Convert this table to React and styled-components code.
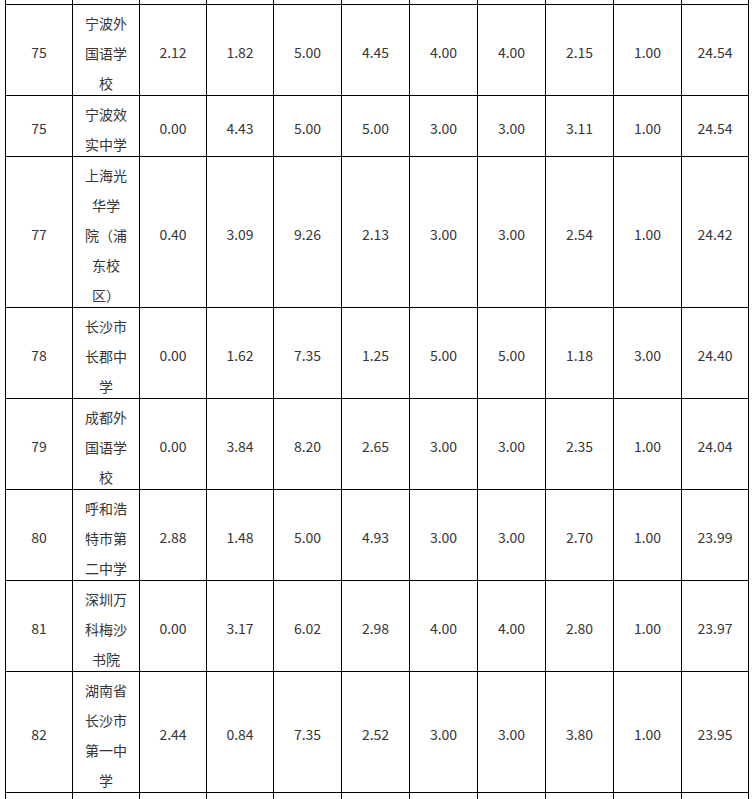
import React from "react";
import styled, { createGlobalStyle } from "styled-components";

const GlobalStyle = createGlobalStyle`
  html, body {
    margin: 0;
    padding: 0;
    background: #ffffff;
  }
  body {
    font-family: "Noto Sans CJK SC", "Noto Sans", sans-serif;
  }
`;

const Page = styled.div`
  padding-left: 5px;
`;

const Table = styled.table`
  border-collapse: collapse;
  table-layout: fixed;
  width: 744px;
  color: #363636;
  font-size: 14px;
  line-height: 30px;
`;

const Cell = styled.td`
  border: 1px solid #000;
  padding: 0 4px;
  text-align: center;
  vertical-align: middle;
  white-space: nowrap;
  ${(p) => (p.$stub ? "border-top: none; height: 4px; line-height: 0; padding: 0;" : "")}
  ${(p) => (p.$tail ? "border-bottom: none; height: 30px;" : "")}
`;

const Content = styled.span`
  display: inline-block;
  transform: translateY(${(p) => (p.$multi ? "3px" : "2px")});
`;

const colWidths = [67, 67, 67, 67, 68, 68, 68, 68, 68, 68, 67];

const rows = [
  ["75", ["宁波外", "国语学", "校"], "2.12", "1.82", "5.00", "4.45", "4.00", "4.00", "2.15", "1.00", "24.54"],
  ["75", ["宁波效", "实中学"], "0.00", "4.43", "5.00", "5.00", "3.00", "3.00", "3.11", "1.00", "24.54"],
  ["77", ["上海光", "华学", "院（浦", "东校", "区）"], "0.40", "3.09", "9.26", "2.13", "3.00", "3.00", "2.54", "1.00", "24.42"],
  ["78", ["长沙市", "长郡中", "学"], "0.00", "1.62", "7.35", "1.25", "5.00", "5.00", "1.18", "3.00", "24.40"],
  ["79", ["成都外", "国语学", "校"], "0.00", "3.84", "8.20", "2.65", "3.00", "3.00", "2.35", "1.00", "24.04"],
  ["80", ["呼和浩", "特市第", "二中学"], "2.88", "1.48", "5.00", "4.93", "3.00", "3.00", "2.70", "1.00", "23.99"],
  ["81", ["深圳万", "科梅沙", "书院"], "0.00", "3.17", "6.02", "2.98", "4.00", "4.00", "2.80", "1.00", "23.97"],
  ["82", ["湖南省", "长沙市", "第一中", "学"], "2.44", "0.84", "7.35", "2.52", "3.00", "3.00", "3.80", "1.00", "23.95"],
];

export default function App() {
  return (
    <Page>
      <GlobalStyle />
      <Table>
        <colgroup>
          {colWidths.map((w, i) => (
            <col key={i} style={{ width: w }} />
          ))}
        </colgroup>
        <tbody>
          <tr>
            {colWidths.map((_, i) => (
              <Cell key={i} $stub />
            ))}
          </tr>
          {rows.map((r, ri) => (
            <tr key={ri}>
              {r.map((c, ci) => (
                <Cell key={ci}>
                  {Array.isArray(c) ? (
                    <Content $multi>
                      {c.map((line, li) => (
                        <React.Fragment key={li}>
                          {li > 0 && <br />}
                          {line}
                        </React.Fragment>
                      ))}
                    </Content>
                  ) : (
                    <Content>{c}</Content>
                  )}
                </Cell>
              ))}
            </tr>
          ))}
          <tr>
            {colWidths.map((_, i) => (
              <Cell key={i} $tail />
            ))}
          </tr>
        </tbody>
      </Table>
    </Page>
  );
}
